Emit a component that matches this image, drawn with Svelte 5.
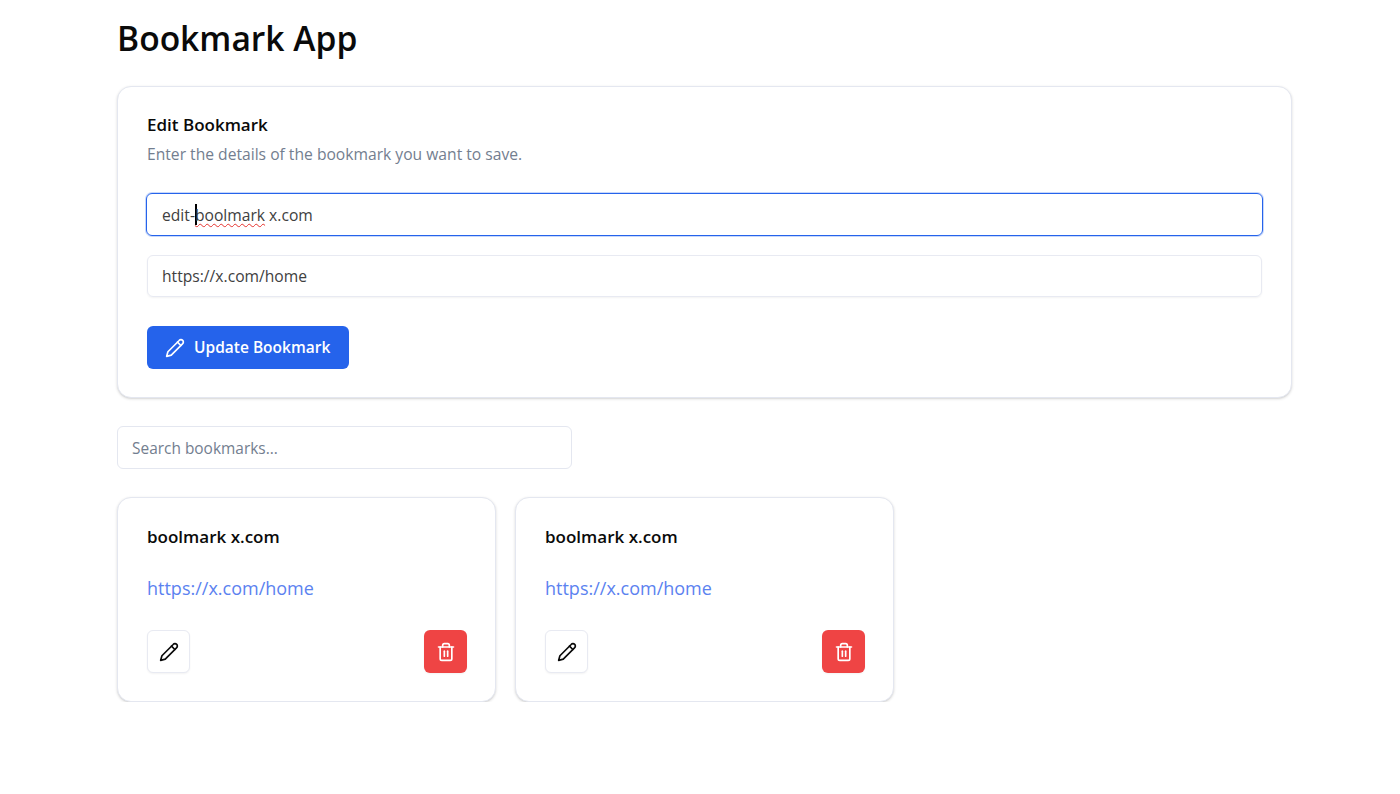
<script>
	const bookmarks = [
		{ id: 1, title: "boolmark x.com", url: "https://x.com/home" },
		{ id: 2, title: "boolmark x.com", url: "https://x.com/home" }
	];
</script>

{#snippet pencil(size)}
	<svg width={size} height={size} viewBox="0 0 24 24" fill="none" stroke="currentColor" stroke-width="2" stroke-linecap="round" stroke-linejoin="round">
		<path d="M17 3a2.85 2.83 0 1 1 4 4L7.5 20.5 2 22l1.5-5.5Z" />
		<path d="m15 5 4 4" />
	</svg>
{/snippet}

<main>
	<h1>Bookmark App</h1>

	<section class="card form">
		<h2>Edit Bookmark</h2>
		<p class="sub">Enter the details of the bookmark you want to save.</p>

		<div class="input focused">edit-<i class="caret"></i><span class="typo">boolmark</span> x.com</div>
		<div class="input">https://x.com/home</div>

		<button class="primary">
			{@render pencil(20)}
			<span>Update Bookmark</span>
		</button>
	</section>

	<input class="search" type="text" placeholder="Search bookmarks..." />

	<div class="grid">
		{#each bookmarks as b (b.id)}
			<article class="card item">
				<h3>{b.title}</h3>
				<a href={b.url}>{b.url}</a>
				<div class="actions">
					<button class="icon" aria-label="Edit">{@render pencil(20)}</button>
					<button class="icon danger" aria-label="Delete">
						<svg width="20" height="20" viewBox="0 0 24 24" fill="none" stroke="currentColor" stroke-width="2" stroke-linecap="round" stroke-linejoin="round">
							<path d="M3 6h18" />
							<path d="M19 6v14c0 1-1 2-2 2H7c-1 0-2-1-2-2V6" />
							<path d="M8 6V4c0-1 1-2 2-2h4c1 0 2 1 2 2v2" />
							<line x1="10" y1="11" x2="10" y2="17" />
							<line x1="14" y1="11" x2="14" y2="17" />
						</svg>
					</button>
				</div>
			</article>
		{/each}
	</div>
</main>

<style>
	:global(body) {
		margin: 0;
		background: #fff;
		color: #0a0a0a;
		font-family: "Open Sans", "Noto Sans", sans-serif;
	}

	main {
		width: 1175px;
		margin-left: 117px;
		padding-top: 13px;
	}

	h1 {
		margin: 0 0 23px;
		font-size: 33.6px;
		line-height: 50px;
		font-weight: 600;
	}

	.card {
		box-sizing: border-box;
		background: #fff;
		border: 1px solid #e4e7f0;
		border-radius: 14px;
		box-shadow: 0 1px 3px rgba(0, 0, 0, 0.14), 0 1px 2px -1px rgba(0, 0, 0, 0.12);
	}

	.form {
		height: 312px;
		padding: 28px 29px 29px;
		margin-bottom: 28px;
	}

	h2 {
		margin: 0;
		font-size: 17px;
		line-height: 20px;
		font-weight: 600;
	}

	.sub {
		margin: 9px 0 29px;
		font-size: 15.65px;
		line-height: 20px;
		color: #737e8f;
	}

	.input {
		box-sizing: border-box;
		height: 42px;
		margin-bottom: 19px;
		padding: 0 14px;
		border: 1px solid #e8eaf2;
		border-radius: 6px;
		box-shadow: 0 1px 2px rgba(0, 0, 0, 0.05);
		font-size: 15.65px;
		line-height: 42px;
		color: #404040;
		display: flex;
		align-items: center;
		white-space: pre;
	}

	.focused {
		height: 43px;
		margin-left: -1px;
		margin-right: -1px;
		padding-left: 15px;
		border: 1px solid #2563eb;
		box-shadow: 0 0 0 1px rgba(37, 99, 235, 0.25);
	}

	.caret {
		width: 2px;
		height: 21px;
		margin-right: -2px;
		background: #000;
	}

	.typo {
		text-decoration: underline wavy #e5322d 1px;
		text-underline-offset: 2px;
	}

	button {
		font-family: inherit;
		cursor: pointer;
	}

	.primary {
		display: flex;
		align-items: center;
		gap: 9px;
		height: 43px;
		width: 202px;
		margin-top: 29px;
		padding: 0 18px;
		border: none;
		border-radius: 6px;
		background: #2563eb;
		color: #fff;
		font-size: 15.5px;
		font-weight: 600;
	}

	.primary span {
		margin-top: -2px;
	}

	.search {
		display: block;
		box-sizing: border-box;
		width: 455px;
		height: 43px;
		margin-bottom: 28px;
		padding: 0 14px;
		border: 1px solid #e4e7f0;
		border-radius: 6px;
		font-family: inherit;
		font-size: 15.45px;
		color: #404040;
		outline: none;
	}

	.search::placeholder {
		color: #737e8f;
	}

	.grid {
		display: grid;
		grid-template-columns: repeat(3, 379px);
		gap: 19px;
	}

	.item {
		height: 205px;
		padding: 28px 29px;
		display: flex;
		flex-direction: column;
	}

	h3 {
		margin: 0;
		font-size: 17px;
		line-height: 22px;
		font-weight: 600;
	}

	a {
		margin-top: 29px;
		font-size: 18px;
		line-height: 22px;
		color: #5b82f0;
		text-decoration: none;
	}

	.actions {
		display: flex;
		justify-content: space-between;
		margin-top: auto;
		margin-right: -1px;
	}

	.icon {
		display: flex;
		align-items: center;
		justify-content: center;
		box-sizing: border-box;
		width: 43px;
		height: 43px;
		padding: 0;
		border: 1px solid #e8eaf2;
		border-radius: 6px;
		background: #fff;
		color: #0a0a0a;
		box-shadow: 0 1px 2px rgba(0, 0, 0, 0.05);
	}

	.danger {
		border: none;
		background: #ef4444;
		color: #fff;
	}
</style>
